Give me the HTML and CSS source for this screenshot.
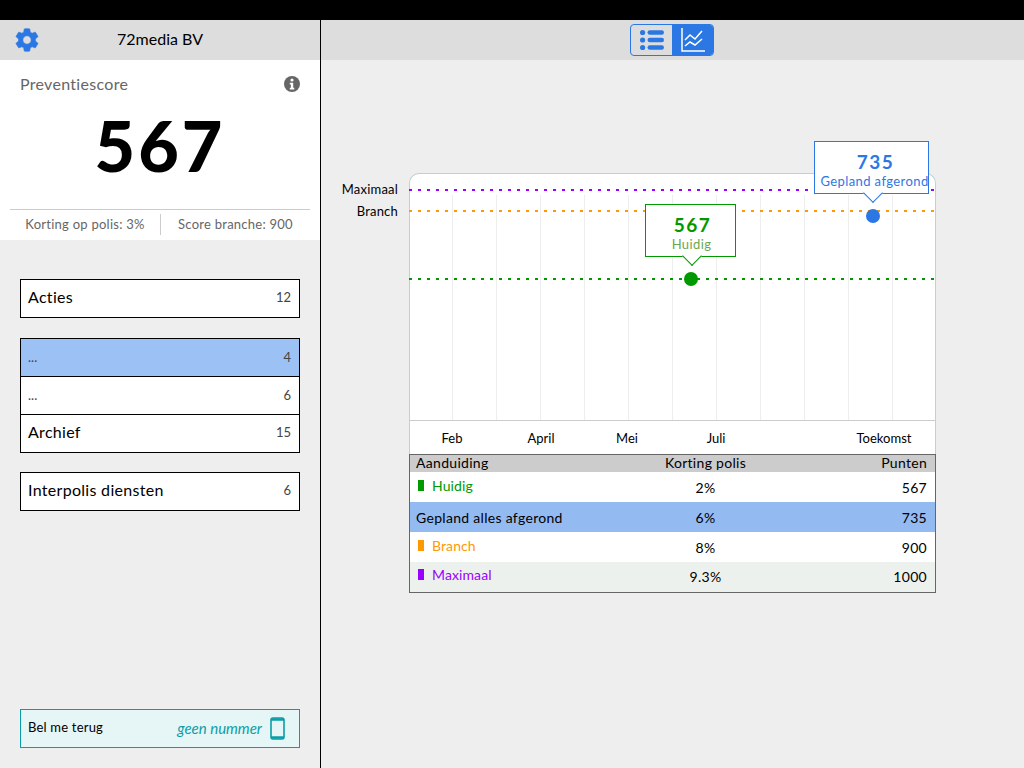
FILE: index.html
```html
<!DOCTYPE html>
<html lang="nl">
<head>
  <meta charset="UTF-8" />
  <title>Preventiescore</title>
  <link rel="stylesheet" href="styles.css">
</head>
<body>
  <div class="topbar"></div>
  <div class="app">
    <aside class="sidebar">
      <div class="side-head">
        <svg class="gear" viewBox="0 0 24 24"><path d="M19.14 12.94c.04-.3.06-.61.06-.94 0-.32-.02-.64-.07-.94l2.03-1.58a.49.49 0 0 0 .12-.61l-1.92-3.32a.488.488 0 0 0-.59-.22l-2.39.96c-.5-.38-1.03-.7-1.62-.94l-.36-2.54a.484.484 0 0 0-.48-.41h-3.84c-.24 0-.43.17-.47.41l-.36 2.54c-.59.24-1.13.57-1.62.94l-2.39-.96c-.22-.08-.47 0-.59.22L2.74 8.87c-.12.21-.08.47.12.61l2.03 1.58c-.05.3-.09.63-.09.94s.02.64.07.94l-2.03 1.58a.49.49 0 0 0-.12.61l1.92 3.32c.12.22.37.29.59.22l2.39-.96c.5.38 1.03.7 1.62.94l.36 2.54c.05.24.24.41.48.41h3.84c.24 0 .44-.17.47-.41l.36-2.54c.59-.24 1.13-.56 1.62-.94l2.39.96c.22.08.47 0 .59-.22l1.92-3.32c.12-.22.07-.47-.12-.61l-2.01-1.58zM12 15.6c-1.98 0-3.6-1.62-3.6-3.6s1.62-3.6 3.6-3.6 3.6 1.62 3.6 3.6-1.62 3.6-3.6 3.6z"/></svg>
        <span>72media BV</span>
      </div>

      <section class="score">
        <div class="score-title">
          <span>Preventiescore</span>
          <svg class="info" viewBox="0 0 16 16">
            <circle cx="8" cy="8" r="8"/>
            <circle class="info-mark" cx="8" cy="4" r="1.6"/>
            <path class="info-mark" d="M5.8 6.8h3.4v5h1.1v1.6H5.8v-1.6h1.1V8.400H5.800z"/>
          </svg>
        </div>
        <div class="score-value">567</div>
        <div class="score-foot">
          <span>Korting op polis: 3%</span>
          <span>Score branche: 900</span>
        </div>
      </section>

      <div class="list-box list-first">
        <div class="list-row row-big"><span>Acties</span><small>12</small></div>
      </div>
      <div class="list-box">
        <div class="list-row row-active"><span>...</span><small>4</small></div>
        <div class="list-row"><span>...</span><small>6</small></div>
        <div class="list-row row-big"><span>Archief</span><small>15</small></div>
      </div>
      <div class="list-box list-last">
        <div class="list-row row-big"><span>Interpolis diensten</span><small>6</small></div>
      </div>

      <div class="callback">
        <span class="callback-label">Bel me terug</span>
        <em>geen nummer</em>
        <svg class="phone" width="15" height="23" viewBox="0 0 15 23">
          <rect x="1" y="1" width="13" height="21" rx="2"/>
          <path d="M1 2.500h13M1 20.500h13"/>
        </svg>
      </div>
    </aside>

    <main class="main">
      <header class="main-head">
        <div class="switch">
          <button class="switch-btn">
            <svg width="24" height="22" viewBox="0 0 24 22">
              <circle cx="2.600" cy="3.500" r="2.600"/><circle cx="2.600" cy="11" r="2.600"/><circle cx="2.600" cy="18.500" r="2.600"/>
              <rect x="7.500" y="1.200" width="16.500" height="4.600" rx="2.300"/>
              <rect x="7.500" y="8.700" width="16.500" height="4.600" rx="2.300"/>
              <rect x="7.500" y="16.200" width="16.500" height="4.600" rx="2.300"/>
            </svg>
          </button>
          <button class="switch-btn switch-on">
            <svg width="24" height="24" viewBox="0 0 24 24">
              <path d="M1 0v23h23"/>
              <path d="M4 12l5-5 5 4 7-8M4 18l5-4 5 3 7-6"/>
            </svg>
          </button>
        </div>
      </header>

      <div class="content">
        <div class="chart">
          <span class="axis-label label-max">Maximaal</span>
          <span class="axis-label label-branch">Branch</span>

          <div class="plot">
            <svg class="plot-svg" width="527" height="247" viewBox="0 0 527 247">
              <path class="grid" d="M43.500 22V247M87.500 22V247M131.500 22V247M175.500 22V247M219.500 22V247M263.500 22V247M307.500 22V247M351.500 22V247M395.500 22V247M439.500 22V247M483.500 22V247"/>
              <line class="dots dots-max" x1="0" y1="17" x2="527" y2="17"/>
              <line class="dots dots-branch" x1="0" y1="38" x2="527" y2="38"/>
              <line class="dots dots-now" x1="0" y1="106" x2="527" y2="106"/>
              <circle class="pt-now" cx="282" cy="106" r="7"/>
              <circle class="pt-plan" cx="464" cy="43" r="7"/>
            </svg>
          </div>

          <div class="tip tip-now">
            <b>567</b>
            <span>Huidig</span>
          </div>
          <div class="tip tip-plan">
            <b>735</b>
            <span>Gepland afgerond</span>
          </div>

          <div class="months">
            <span>Feb</span><span>April</span><span>Mei</span><span>Juli</span><span></span><span>Toekomst</span>
          </div>

          <table class="legend">
            <thead>
              <tr><th class="col-name">Aanduiding</th><th class="mid col-mid">Korting polis</th><th class="end">Punten</th></tr>
            </thead>
            <tbody>
              <tr><td class="c-now"><i></i>Huidig</td><td class="mid">2%</td><td class="end">567</td></tr>
              <tr class="tr-plan"><td>Gepland alles afgerond</td><td class="mid">6%</td><td class="end">735</td></tr>
              <tr><td class="c-branch"><i></i>Branch</td><td class="mid">8%</td><td class="end">900</td></tr>
              <tr class="tr-max"><td class="c-max"><i></i>Maximaal</td><td class="mid">9.3%</td><td class="end">1000</td></tr>
            </tbody>
          </table>
        </div>
      </div>
    </main>
  </div>
</body>
</html>
```

FILE: styles.css
```css
* {
  box-sizing: border-box;
}
body {
  margin: 0;
  height: 768px;
  overflow: hidden;
  background: #eeeeee;
  font-family: Lato, "Noto Sans", sans-serif;
  font-size: 14px;
  color: #000;
}
.topbar {
  height: 20px;
  background: #000;
}
.app {
  display: flex;
  height: 748px;
}

/* sidebar */
.sidebar {
  width: 321px;
  border-right: 1px solid #000;
  padding-bottom: 20px;
  display: flex;
  flex-direction: column;
}
.side-head {
  height: 40px;
  background: #dddddd;
  display: flex;
  align-items: center;
  justify-content: center;
  position: relative;
  padding-bottom: 3px;
  font-size: 16px;
}
.gear {
  position: absolute;
  left: 13px;
  top: 6px;
  width: 28px;
  height: 28px;
  fill: #2b78e4;
  stroke: #2b78e4;
  stroke-width: 0.6;
}
.score {
  height: 180px;
  background: #fff;
  display: flex;
  flex-direction: column;
  padding: 14px 0 0;
}
.score-title {
  display: flex;
  justify-content: space-between;
  align-items: center;
  padding: 0 20px;
  font-size: 16px;
  letter-spacing: 0.3px;
  color: #666;
}
.info {
  width: 16px;
  height: 16px;
  fill: #666;
}
.info-mark {
  fill: #fff;
}
.score-value {
  text-align: center;
  font-size: 70px;
  font-weight: 900;
  line-height: 74px;
  letter-spacing: 3px;
  margin-top: 15px;
}
.score-foot {
  margin: auto 10px 0;
  height: 31px;
  border-top: 1px solid #ccc;
  display: grid;
  grid-template-columns: 150px 150px;
  align-items: center;
  text-align: center;
  padding-bottom: 2px;
  font-size: 13px;
  letter-spacing: 0.25px;
  color: #666;
}
.score-foot span {
  line-height: 21px;
}
.score-foot span + span {
  border-left: 1px solid #ccc;
}
.list-box {
  margin: 20px 20px 0;
  background: #fff;
  border: 1px solid #000;
}
.list-first {
  margin-top: 39px;
}
.list-last {
  margin-top: 19px;
}
.list-row {
  height: 38px;
  padding: 0 8px 2px 7px;
  display: flex;
  justify-content: space-between;
  align-items: center;
  border-top: 1px solid #000;
  font-size: 13px;
  color: #444;
}
.list-row:first-child {
  border-top: 0;
  height: 37px;
}
.row-big {
  padding-bottom: 4px;
}
.row-big span {
  font-size: 16px;
  letter-spacing: 0.3px;
  color: #000;
}
.row-active {
  background: #9cc2f5;
}
.list-row small {
  font-size: 13px;
}
.callback {
  margin: auto 20px 0;
  height: 39px;
  border: 1px solid #0b9ea8;
  background: #e6f5f5;
  display: flex;
  align-items: center;
  padding: 0 14px 0 7px;
}
.callback-label {
  padding-bottom: 4px;
  font-size: 13px;
  letter-spacing: 0.2px;
}
.callback em {
  margin-left: auto;
  margin-right: 8px;
  padding-bottom: 2px;
  font-size: 15px;
  color: #0b9ea8;
}
.phone {
  fill: none;
  stroke: #0b9ea8;
  stroke-width: 1.6;
}
.phone path {
  stroke-width: 2.4;
}

/* main */
.main {
  flex: 1;
  display: flex;
  flex-direction: column;
}
.main-head {
  height: 40px;
  background: #dddddd;
  display: flex;
  justify-content: center;
  align-items: flex-start;
  padding: 4px 1px 0 0;
}
.switch {
  display: flex;
  width: 84px;
  height: 32px;
  border: 1px solid #2b78e4;
  border-radius: 4px;
  overflow: hidden;
}
.switch-btn {
  flex: 1;
  border: 0;
  padding: 0;
  background: transparent;
  display: flex;
  align-items: center;
  justify-content: center;
}
.switch-btn svg {
  fill: #2b78e4;
}
.switch-on {
  background: #2b78e4;
}
.switch-on svg {
  fill: none;
  stroke: #fff;
  stroke-width: 1.500;
}
.content {
  padding: 113px 0 0 88px;
}
.chart {
  width: 527px;
  position: relative;
}
.axis-label {
  position: absolute;
  right: 538px;
  font-size: 13px;
  line-height: 16px;
  letter-spacing: 0.2px;
}
.label-max {
  top: 8px;
}
.label-branch {
  top: 30px;
}
.plot {
  height: 248px;
  background: #fff;
  border: 1px solid #bcd3cf;
  border-bottom: 1px solid #ccc;
  border-radius: 10px 10px 0 0;
}
.plot-svg {
  display: block;
  margin: -1px;
}
.grid {
  stroke: #eeeeee;
  fill: none;
}
.dots {
  stroke-width: 2;
  stroke-dasharray: 3 6;
}
.dots-max { stroke: #9900ff; }
.dots-branch { stroke: #ff9900; }
.dots-now { stroke: #009900; }
.pt-now { fill: #009900; }
.pt-plan { fill: #2b78e4; }

.tip {
  position: absolute;
  height: 53px;
  background: #fff;
  border: 1px solid;
  display: flex;
  flex-direction: column;
  align-items: center;
  padding-top: 9px;
}
.tip::after {
  content: "";
  position: absolute;
  bottom: -7px;
  left: 50%;
  width: 13px;
  height: 13px;
  margin-left: -6px;
  background: #fff;
  border: solid;
  border-width: 0 1px 1px 0;
  transform: rotate(45deg);
}
.tip b,
.tip span {
  position: relative;
  z-index: 1;
  white-space: nowrap;
}
.tip b {
  margin-left: 2px;
  font-size: 19px;
  line-height: 21px;
  letter-spacing: 1.5px;
}
.tip span {
  font-size: 13px;
  line-height: 18px;
  letter-spacing: 0.4px;
}
.tip-now {
  left: 236px;
  top: 31px;
  width: 91px;
  padding-left: 2px;
  color: #009900;
}
.tip-now span {
  color: #6aa84f;
}
.tip-plan {
  left: 405px;
  top: -32px;
  width: 115px;
  padding-left: 6px;
  color: #2b78e4;
}
.months {
  height: 33px;
  background: #fff;
  border-left: 1px solid #bcd3cf;
  border-right: 1px solid #bcd3cf;
  display: grid;
  grid-template-columns: 84px 94px 78px 100px 67px 102px;
  align-items: center;
  text-align: center;
  font-size: 13px;
}
.legend {
  width: 527px;
  border-collapse: collapse;
  border: 1px solid #666;
  font-size: 14px;
  letter-spacing: 0.3px;
  background: #fff;
  table-layout: fixed;
}
.legend th {
  height: 17px;
  padding: 0 8px 2px 6px;
  line-height: 15px;
  background: #ccc;
  font-weight: 400;
  text-align: left;
}
.col-name {
  width: 230px;
}
.col-mid {
  width: 134px;
}
.legend td {
  height: 30px;
  padding: 0 8px 0 6px;
}
.legend .mid {
  text-align: center;
}
.legend .end {
  text-align: right;
}
.legend i {
  display: inline-block;
  width: 6px;
  height: 11px;
  margin: 0 8px 0 2px;
  background: currentColor;
}
.legend .c-now,
.legend .c-branch,
.legend .c-max {
  padding-bottom: 4px;
  letter-spacing: 0.1px;
}
.c-now { color: #009900; }
.c-branch { color: #ff9900; }
.c-max { color: #9900ff; }
.tr-plan { background: #94baf2; }
.tr-max { background: #edf1ee; }
```
